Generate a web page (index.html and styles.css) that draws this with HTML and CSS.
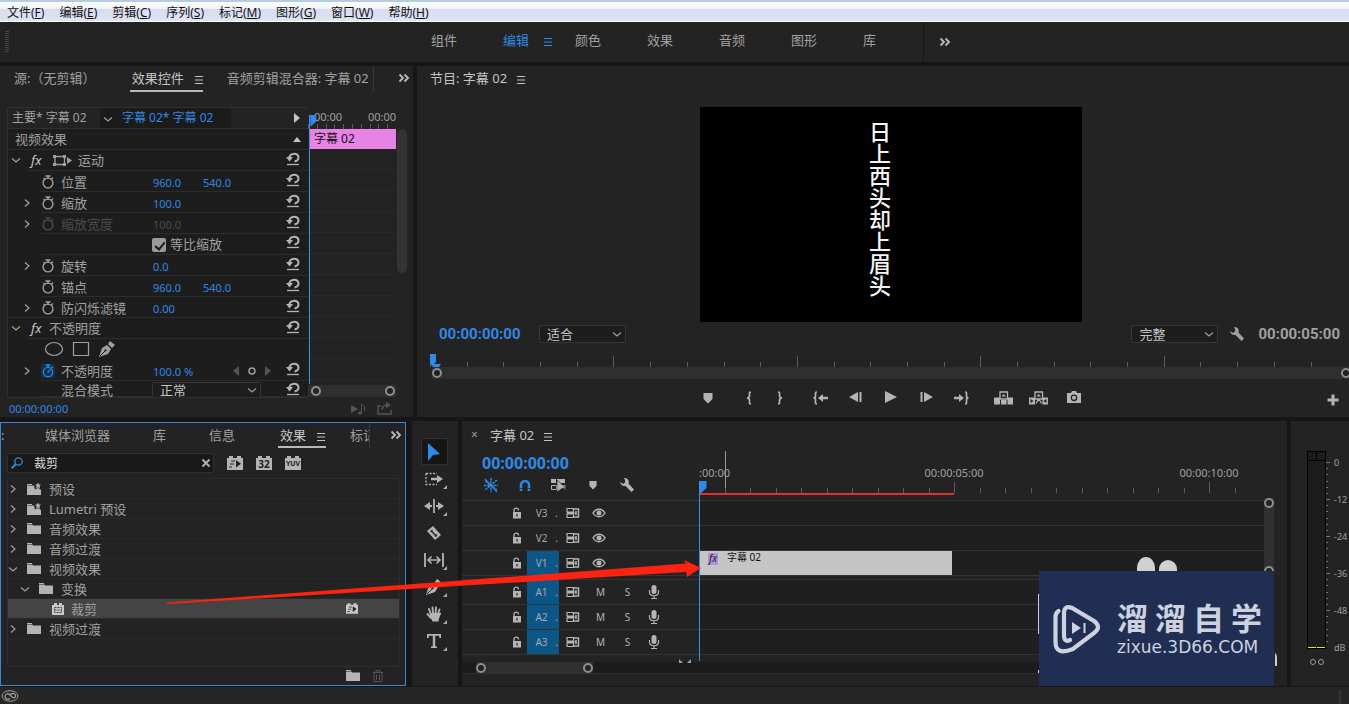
FILE: index.html
```html
<!DOCTYPE html>
<html lang="zh-CN">
<head>
<meta charset="utf-8">
<title>字幕 02</title>
<link rel="stylesheet" href="styles.css">
</head>
<body>
<svg class="sprite" aria-hidden="true">
  <symbol id="reset" viewBox="0 0 14 14"><path d="M3 6.500C4 0 12.500.5 12.500 5.500c0 2.500-1.500 3.500-4 4" fill="none" stroke="currentColor" stroke-width="2"/><path d="M0 5h7L3.500 9.500z" fill="currentColor"/><path d="M1 12.500h12" stroke="currentColor" stroke-width="1.300"/></symbol>
  <symbol id="watch" viewBox="0 0 14 14"><circle cx="7" cy="8" r="4.900" fill="none" stroke="currentColor" stroke-width="1.400"/><path d="M4.500 1h5M7 1v2.500M10.500 4l1.500-1.500M3.500 4L2.500 3" stroke="currentColor" stroke-width="1.400" fill="none"/></symbol>
  <symbol id="watch-on" viewBox="0 0 14 14"><circle cx="7" cy="8" r="4.700" fill="none" stroke="currentColor" stroke-width="1.200"/><path d="M4.500 1h5M7 1v2.500M10.500 4l1.500-1.500M6.500 8.500l3-3" stroke="currentColor" stroke-width="1.300" fill="none"/></symbol>
  <symbol id="right" viewBox="0 0 10 10"><path d="M3 1.500L7 5 3 8.500" fill="none" stroke="currentColor" stroke-width="1.200"/></symbol>
  <symbol id="down" viewBox="0 0 10 10"><path d="M1 3.500l4 3.500 4-3.500" fill="none" stroke="currentColor" stroke-width="1.200"/></symbol>
  <symbol id="menu" viewBox="0 0 10 10"><path d="M1 1.500h8M1 5h8M1 8.500h8" stroke="currentColor"/></symbol>
  <symbol id="more" viewBox="0 0 12 10"><path d="M1.500 1.500L5 5 1.500 8.500M6.500 1.500L10 5 6.500 8.500" fill="none" stroke="currentColor" stroke-width="1.900"/></symbol>
  <symbol id="motion" viewBox="0 0 20 14"><path d="M3 3.500h9.500v8H3z" fill="none" stroke="currentColor" stroke-width="1.300"/><path d="M1 2h3v3H1zM11 2h3v3h-3zM1 10h3v3H1zM11 10h3v3h-3z" fill="currentColor"/><path d="M15 4l5 3.500-5 3.500z" fill="currentColor"/></symbol>
  <symbol id="pen" viewBox="0 0 16 16"><path d="M0 16L3 7l5-3 4 4-3 5z" fill="currentColor"/><path d="M9 3l2-3 5 4-3 3z" fill="currentColor"/><path d="M1 15l5-5" stroke="#1d1d1d"/><circle cx="6.500" cy="9.300" r="1.100" fill="#1d1d1d"/></symbol>
  <symbol id="folder" viewBox="0 0 14 12"><path d="M0 0h5v1H0z" fill="currentColor"/><path d="M0 1.500h5.500l.5 1h8V11H0z" fill="currentColor"/></symbol>
  <symbol id="folder-star" viewBox="0 0 14 12"><path d="M0 1h5v1H0zM0 2.500h7l1 4 3-1.500 3 2V12H0z" fill="currentColor"/><path d="M11-1l.9 2.500H14L12.500 3l.6 2.800L11 4.200 9 5.800 9.600 3 8 1.500h2.100z" fill="currentColor"/></symbol>
  <symbol id="fast" viewBox="0 0 16 14"><path d="M0 2h2V0h4v2h4V0h4v2h2v12H0z" fill="currentColor"/><path d="M9 4l5 3.700L9 11.500z" fill="#222"/><path d="M4 5h4M3 8h4M2 11h3" stroke="#222"/></symbol>
  <symbol id="brick" viewBox="0 0 16 14"><path d="M0 2h2V0h4v2h4V0h4v2h2v12H0z" fill="currentColor"/></symbol>
  <symbol id="crop" viewBox="0 0 12 12"><path d="M0 2h2V0h3v2h2V0h3v2h2v10H0z" fill="currentColor"/><path d="M2.500 4.500h7v5h-7zM2.500 7h7" fill="none" stroke="#444" stroke-dasharray="2 1"/></symbol>
  <symbol id="find" viewBox="0 0 12 12"><circle cx="7.500" cy="4.500" r="3.700" fill="none" stroke="currentColor" stroke-width="1.300"/><path d="M5 7L.7 11.300" stroke="currentColor" stroke-width="2"/></symbol>
  <symbol id="trash" viewBox="0 0 12 12"><path d="M1 2.500h10M4 2V.7h4V2M2 3v8.500h8V3M4.500 4.500v5.500M7.500 4.500v5.500" fill="none" stroke="currentColor"/></symbol>
  <symbol id="marker" viewBox="0 0 10 12"><path d="M.5 1h9v6L5 11.500.5 7z" fill="currentColor"/></symbol>
  <symbol id="in" viewBox="0 0 6 14"><path d="M5 1C3 1 3.500 2 3.500 4.500 3.500 6 2.500 7 1 7c1.500 0 2.500 1 2.500 2.500C3.500 12 3 13 5 13" fill="none" stroke="currentColor" stroke-width="1.700"/></symbol>
  <symbol id="out" viewBox="0 0 6 14"><path d="M1 1c2 0 1.500 1 1.500 3.500C2.500 6 3.500 7 5 7 3.500 7 2.500 8 2.500 9.500 2.500 12 3 13 1 13" fill="none" stroke="currentColor" stroke-width="1.700"/></symbol>
  <symbol id="goin" viewBox="0 0 16 14"><path d="M4 1C2 1 2.500 2 2.500 5 2.500 6 2 7 .5 7 2 7 2.500 8 2.500 9c0 3-.5 4 1.500 4" fill="none" stroke="currentColor" stroke-width="1.700"/><path d="M5 7l5-4v2.800h5v2.400h-5V11z" fill="currentColor"/></symbol>
  <symbol id="goout" viewBox="0 0 16 14"><path d="M12 1c2 0 1.500 1 1.500 4 0 1 .5 2 2 2-1.500 0-2 1-2 2 0 3 .5 4-1.500 4" fill="none" stroke="currentColor" stroke-width="1.700"/><path d="M11 7L6 3v2.800H1v2.400h5V11z" fill="currentColor"/></symbol>
  <symbol id="back" viewBox="0 0 14 12"><path d="M0 6l9-5v10z" fill="currentColor"/><path d="M11.500 1v10" stroke="currentColor" stroke-width="2"/></symbol>
  <symbol id="fwd" viewBox="0 0 14 12"><path d="M14 6L5 1v10z" fill="currentColor"/><path d="M2.500 1v10" stroke="currentColor" stroke-width="2"/></symbol>
  <symbol id="play" viewBox="0 0 12 12"><path d="M0 0l12 6-12 6z" fill="currentColor"/></symbol>
  <symbol id="lift" viewBox="0 0 20 14"><path d="M0 6.500h6v7H0zM7 9h5.500v4.500H7zM13.500 6.500h5.500v7h-5.500z" fill="currentColor"/><path d="M6 1h7.500v7H6z" fill="none" stroke="currentColor" stroke-width="1.300"/><path d="M7.500 5.500L9.700 3 12 5.500z" fill="currentColor"/></symbol>
  <symbol id="extract" viewBox="0 0 20 14"><path d="M0 6.500h6v7H0zM13.500 6.500h5.500v7h-5.500z" fill="currentColor"/><path d="M1.500 8l3 2-3 2zM17.500 8l-3 2 3 2z" fill="#222"/><path d="M6 1h7.500v7H6zM7 12.500L9.700 8l3 4.500" fill="none" stroke="currentColor" stroke-width="1.300"/><path d="M7.500 5.500L9.700 3 12 5.500z" fill="currentColor"/></symbol>
  <symbol id="camera" viewBox="0 0 14 12"><path d="M0 2h4l1-2h4l1 2h4v10H0z" fill="currentColor"/><circle cx="7" cy="6.800" r="2.700" fill="none" stroke="#222" stroke-width="1.300"/></symbol>
  <symbol id="plus" viewBox="0 0 12 12"><path d="M6 .5v11M.5 6h11" stroke="currentColor" stroke-width="3"/></symbol>
  <symbol id="wrench" viewBox="0 0 14 14"><path d="M4 0c4 0 5.500 2.500 4.500 5.500l5.500 6-2.500 2.500-6-6C3 8.500.5 7 0 4l3 2 2.200-1.800L5 2z" fill="currentColor"/></symbol>
  <symbol id="nest" viewBox="0 0 16 16"><path d="M8 1v14M1 8.500h14M2 4l12 9M14 3L2 13" stroke="currentColor" stroke-width="1.500" stroke-dasharray="2.500 .7"/><path d="M2 2l12 13" stroke="currentColor" stroke-width="1.200"/></symbol>
  <symbol id="magnet" viewBox="0 0 12 12"><path d="M2 12V6a4 4 0 0 1 8 0v6" fill="none" stroke="currentColor" stroke-width="2.600"/><path d="M0 9.500h12" stroke="#222" stroke-width=".7"/></symbol>
  <symbol id="linked" viewBox="0 0 16 14"><path d="M0 1h5v4H0zM6 1h8v4H6z" fill="currentColor"/><path d="M.5 7.500h5v4h-5zM12 7.500h2v4" fill="none" stroke="currentColor"/><path d="M6 2l9 8-4 .5L6 14z" fill="currentColor" stroke="#222" stroke-width=".6"/></symbol>
  <symbol id="lock" viewBox="0 0 10 12"><path d="M1 5h8v6.500H1z" fill="currentColor"/><path d="M2 5V3a2.300 2.300 0 0 1 4.500 0v.5" fill="none" stroke="currentColor" stroke-width="1.300"/><path d="M5 7v2.500" stroke="#222" stroke-width="1.200"/></symbol>
  <symbol id="sync" viewBox="0 0 14 12"><path d="M1 1.500h6.500v3.500H1zM1 7h6.500v3.500H1zM1 6h9" fill="none" stroke="currentColor" stroke-width="1.200"/><path d="M8 2h4.500v8H8M10 4v4" fill="none" stroke="currentColor" stroke-width="1.500"/></symbol>
  <symbol id="eye" viewBox="0 0 14 10"><path d="M1 5c3-5 9-5 12 0-3 5-9 5-12 0z" fill="none" stroke="currentColor" stroke-width="1.400"/><circle cx="7" cy="5" r="2.500" fill="currentColor"/></symbol>
  <symbol id="mic" viewBox="0 0 12 14"><rect x="3.500" y="0" width="5" height="9" rx="2.500" fill="currentColor"/><path d="M1.500 5v2c0 5 9 5 9 0V5M6 10.500V13M3 13.500h6" fill="none" stroke="currentColor" stroke-width="1.200"/></symbol>
  <symbol id="select" viewBox="0 0 16 18"><path d="M2 0l12 11-7 1-5 6z" fill="currentColor"/></symbol>
  <symbol id="trackselect" viewBox="0 0 18 14"><path d="M1 1.500h11M1 1.500v11h11" fill="none" stroke="currentColor" stroke-width="1.300" stroke-dasharray="2 1.500"/><path d="M6 5.800h6V3l6 4-6 4V8.300H6z" fill="currentColor"/></symbol>
  <symbol id="ripple" viewBox="0 0 20 14"><path d="M10 0v14" stroke="currentColor" stroke-width="1.700"/><path d="M0 7l6-4v3h2v2H6v3zM20 7l-6-4v3h-2v2h2v3z" fill="currentColor"/></symbol>
  <symbol id="razor" viewBox="0 0 16 16"><path d="M1 6l6-5 8 9-6 5z" fill="currentColor"/><path d="M5 5.500l5.500 6M4.500 7l2-2M9 11.500l2-2" stroke="#222" stroke-width="1.200"/></symbol>
  <symbol id="slip" viewBox="0 0 20 14"><path d="M1 0v14M19 0v14" stroke="currentColor" stroke-width="1.800"/><path d="M4 7h12M7.500 3.500L4 7l3.500 3.500M12.500 3.500L16 7l-3.500 3.500" fill="none" stroke="currentColor" stroke-width="1.600"/></symbol>
  <symbol id="hand" viewBox="0 0 16 16"><path d="M5 9L3 3M7 8L6.500 1.500M9.500 8L10 1.500M11.500 9L13.500 3.500M5 12L1.500 8" stroke="currentColor" stroke-width="1.900" stroke-linecap="round"/><path d="M4 7h8.500l2.500-.5c0 3-2 4-2.500 9h-6c-.5-2-2.500-4-2.500-8.500z" fill="currentColor"/></symbol>
  <symbol id="type" viewBox="0 0 14 14"><path d="M0 0h14v4h-1.500L12 1.800H8.200v10.400L10 12.500V14H4v-1.500l1.800-.3V1.800H2L1.500 4H0z" fill="currentColor"/></symbol>
  <symbol id="cc" viewBox="0 0 18 12"><ellipse cx="9" cy="6" rx="8" ry="5.300" fill="none" stroke="currentColor"/><path d="M9 8.500c-2 1.500-5 .5-5-2S7 3 8.500 4.500l3 3c3 1.500 4.500-3 1-4-1.500-.3-2.500.5-3 1" fill="none" stroke="currentColor" stroke-width="1.300"/></symbol>
  <symbol id="playhead" viewBox="0 0 7 12"><path d="M0 0h6.500v7L1 12H0z" fill="currentColor"/></symbol>
</svg>

<nav class="menubar">
  <button>文件(<u>F</u>)</button><button>编辑(<u>E</u>)</button><button>剪辑(<u>C</u>)</button><button>序列(<u>S</u>)</button><button>标记(<u>M</u>)</button><button>图形(<u>G</u>)</button><button>窗口(<u>W</u>)</button><button>帮助(<u>H</u>)</button>
</nav>

<nav class="workspaces">
  <span class="grip"></span>
  <div class="spaces">
    <button>组件</button><button class="on">编辑<svg class="i10"><use href="#menu"/></svg></button><button>颜色</button><button>效果</button><button>音频</button><button>图形</button><button>库</button>
  </div>
  <button class="overflow" aria-label="更多工作区"><svg class="more"><use href="#more"/></svg></button>
</nav>

<main>
<div class="row upper">
  <section class="panel controls">
    <div class="tabs">
      <button class="source">源:（无剪辑）</button>
      <button class="tab-on">效果控件<svg class="i10"><use href="#menu"/></svg></button>
      <button class="mixer">音频剪辑混合器: 字幕 02</button>
      <button class="tabs-more" aria-label="更多面板"><svg class="more"><use href="#more"/></svg></button>
    </div>
    <div class="fx-body">
      <div class="fx-list">
        <div class="clip-head">
          <span class="master">主要* 字幕 02</span>
          <span class="current"><svg class="i10"><use href="#down"/></svg>字幕 02* 字幕 02</span>
          <svg class="tri" viewBox="0 0 6 10"><path d="M0 0l6 5-6 5z" fill="currentColor"/></svg>
        </div>
        <div class="section-head">视频效果<svg class="tri-up" viewBox="0 0 8 5"><path d="M0 5l4-5 4 5z" fill="currentColor"/></svg></div>
        <div class="group"><svg class="i10"><use href="#down"/></svg><em>fx</em><svg class="motion"><use href="#motion"/></svg><span>运动</span><button class="reset" aria-label="重置"><svg class="i14"><use href="#reset"/></svg></button></div>
        <div class="param"><i></i><svg class="i14"><use href="#watch"/></svg><span>位置</span><b>960.0</b><b>540.0</b><button class="reset" aria-label="重置"><svg class="i14"><use href="#reset"/></svg></button></div>
        <div class="param"><i><svg class="i10"><use href="#right"/></svg></i><svg class="i14"><use href="#watch"/></svg><span>缩放</span><b>100.0</b><b></b><button class="reset" aria-label="重置"><svg class="i14"><use href="#reset"/></svg></button></div>
        <div class="param off"><i><svg class="i10"><use href="#right"/></svg></i><svg class="i14"><use href="#watch"/></svg><span>缩放宽度</span><b>100.0</b><b></b><button class="reset" aria-label="重置"><svg class="i14"><use href="#reset"/></svg></button></div>
        <div class="param check"><label><input type="checkbox" checked>等比缩放</label><button class="reset" aria-label="重置"><svg class="i14"><use href="#reset"/></svg></button></div>
        <div class="param"><i><svg class="i10"><use href="#right"/></svg></i><svg class="i14"><use href="#watch"/></svg><span>旋转</span><b>0.0</b><b></b><button class="reset" aria-label="重置"><svg class="i14"><use href="#reset"/></svg></button></div>
        <div class="param"><i></i><svg class="i14"><use href="#watch"/></svg><span>锚点</span><b>960.0</b><b>540.0</b><button class="reset" aria-label="重置"><svg class="i14"><use href="#reset"/></svg></button></div>
        <div class="param last"><i><svg class="i10"><use href="#right"/></svg></i><svg class="i14"><use href="#watch"/></svg><span>防闪烁滤镜</span><b>0.00</b><b></b><button class="reset" aria-label="重置"><svg class="i14"><use href="#reset"/></svg></button></div>
        <div class="group"><svg class="i10"><use href="#down"/></svg><em>fx</em><span>不透明度</span><button class="reset" aria-label="重置"><svg class="i14"><use href="#reset"/></svg></button></div>
        <div class="shapes">
          <button aria-label="椭圆蒙版"><svg class="shape" viewBox="0 0 20 16"><ellipse cx="10" cy="8" rx="8.500" ry="6.500" fill="none" stroke="currentColor" stroke-width="1.200"/></svg></button>
          <button aria-label="矩形蒙版"><svg class="shape" viewBox="0 0 20 16"><path d="M2.500 1.500h15v13h-15z" fill="none" stroke="currentColor" stroke-width="1.200"/></svg></button>
          <button aria-label="钢笔"><svg class="i16"><use href="#pen"/></svg></button>
        </div>
        <div class="param"><i><svg class="i10"><use href="#right"/></svg></i><svg class="i14 keyed"><use href="#watch-on"/></svg><span>不透明度</span><b>100.0 %</b><span class="keys"><svg class="key" viewBox="0 0 6 10"><path d="M6 0v10L0 5z" fill="#555"/></svg><svg class="key-dot" viewBox="0 0 8 8"><circle cx="4" cy="4" r="3" fill="none" stroke="currentColor" stroke-width="1.500"/></svg><svg class="key" viewBox="0 0 6 10"><path d="M0 0v10l6-5z" fill="#555"/></svg></span><button class="reset" aria-label="重置"><svg class="i14"><use href="#reset"/></svg></button></div>
        <div class="param blend"><i></i><i></i><label for="blend">混合模式</label><span class="drop"><select id="blend"><option>正常</option></select><svg class="i10"><use href="#down"/></svg></span><button class="reset" aria-label="重置"><svg class="i14"><use href="#reset"/></svg></button></div>
      </div>
      <div class="mini">
        <div class="mini-ruler"><div class="mini-labels"><span>00:00</span><span>00:00</span></div><div class="ticks mini-ticks" data-count="10"></div></div>
        <div class="mini-clip">字幕 02</div>
        <div class="mini-rows"></div>
        <div class="hscroll"><span class="ring"></span><span class="ring"></span></div>
        <div class="mini-head"><svg><use href="#playhead"/></svg></div>
      </div>
      <div class="vscroll"></div>
    </div>
    <div class="fx-foot"><span>00:00:00:00</span>
      <svg class="i16 first" viewBox="0 0 16 16"><path d="M1 4l7 4-7 4z" fill="currentColor"/><path d="M11.500 12V3l3 3v4" fill="none" stroke="currentColor"/><ellipse cx="10" cy="12" rx="2" ry="1.500" fill="currentColor"/></svg>
      <svg class="i16" viewBox="0 0 16 16"><path d="M4 5H1v8h13V9M5 9c0-4 2-5 6-5" fill="none" stroke="currentColor" stroke-width="1.500"/><path d="M9 1l5 3-5 3.500z" fill="currentColor"/></svg>
    </div>
  </section>

  <section class="panel program">
    <div class="program-title">节目: 字幕 02<svg class="i10"><use href="#menu"/></svg></div>
    <div class="screen"><p>日上西头却上眉头</p></div>
    <div class="monitor-bar">
      <span class="tc blue">00:00:00:00</span>
      <span class="drop"><select aria-label="缩放级别"><option>适合</option></select><svg class="i10"><use href="#down"/></svg></span>
      <span class="drop res"><select aria-label="回放分辨率"><option>完整</option></select><svg class="i10"><use href="#down"/></svg></span>
      <button class="settings" aria-label="设置"><svg class="i14"><use href="#wrench"/></svg></button>
      <span class="tc">00:00:05:00</span>
    </div>
    <div class="monitor-ruler"><div class="ticks" data-count="25" data-major="5"></div><svg class="monitor-head" viewBox="0 0 11 14"><path d="M0 0h6v8l-2 2h7l-2 3H3L0 9z" fill="currentColor"/></svg></div>
    <div class="hscroll wide"><span class="ring"></span><span class="ring"></span></div>
    <div class="transport">
      <span class="side"></span>
      <div><button aria-label="添加标记"><svg class="mk"><use href="#marker"/></svg></button></div>
      <div class="narrow"><button aria-label="标记入点"><svg class="br"><use href="#in"/></svg></button><button aria-label="标记出点"><svg class="br"><use href="#out"/></svg></button></div>
      <div><button aria-label="转到入点"><svg class="go"><use href="#goin"/></svg></button><button aria-label="后退一帧"><svg class="st"><use href="#back"/></svg></button><button aria-label="播放"><svg class="i12"><use href="#play"/></svg></button><button aria-label="前进一帧"><svg class="st"><use href="#fwd"/></svg></button><button aria-label="转到出点"><svg class="go"><use href="#goout"/></svg></button></div>
      <div><button aria-label="提升"><svg class="lf"><use href="#lift"/></svg></button><button aria-label="提取"><svg class="lf"><use href="#extract"/></svg></button><button aria-label="导出帧"><svg class="st"><use href="#camera"/></svg></button></div>
      <span class="side"><button aria-label="按钮编辑器"><svg class="i12"><use href="#plus"/></svg></button></span>
    </div>
  </section>
</div>

<div class="row lower">
  <section class="panel effects">
    <div class="tabs">
      <span class="cut">:</span><button>媒体浏览器</button><button>库</button><button>信息</button><button class="tab-on">效果<svg class="i10"><use href="#menu"/></svg></button><button class="clipped">标记</button>
      <button class="tabs-more" aria-label="更多面板"><svg class="more"><use href="#more"/></svg></button>
    </div>
    <div class="search">
      <div class="box"><svg class="i12"><use href="#find"/></svg><input type="text" value="裁剪" aria-label="搜索效果"><button aria-label="清除"><svg class="i10" viewBox="0 0 10 10"><path d="M1.500 1.500l7 7M8.500 1.500l-7 7" stroke="currentColor" stroke-width="1.800"/></svg></button></div>
      <button aria-label="加速效果"><svg class="badge"><use href="#fast"/></svg></button>
      <button class="lettered"><svg class="badge"><use href="#brick"/></svg><span>32</span></button>
      <button class="lettered yuv"><svg class="badge"><use href="#brick"/></svg><span>YUV</span></button>
    </div>
    <ul class="tree">
      <li><svg class="i10"><use href="#right"/></svg><svg class="fold"><use href="#folder-star"/></svg>预设</li>
      <li><svg class="i10"><use href="#right"/></svg><svg class="fold"><use href="#folder-star"/></svg>Lumetri 预设</li>
      <li><svg class="i10"><use href="#right"/></svg><svg class="fold"><use href="#folder"/></svg>音频效果</li>
      <li><svg class="i10"><use href="#right"/></svg><svg class="fold"><use href="#folder"/></svg>音频过渡</li>
      <li><svg class="i10"><use href="#down"/></svg><svg class="fold"><use href="#folder"/></svg>视频效果</li>
      <li class="l2"><svg class="i10"><use href="#down"/></svg><svg class="fold"><use href="#folder"/></svg>变换</li>
      <li class="l3"><svg class="i12"><use href="#crop"/></svg>裁剪<svg class="fast"><use href="#fast"/></svg></li>
      <li><svg class="i10"><use href="#right"/></svg><svg class="fold"><use href="#folder"/></svg>视频过渡</li>
    </ul>
    <div class="tree-foot"><button aria-label="新建自定义素材箱"><svg class="fold"><use href="#folder"/></svg></button><button class="dim" aria-label="删除"><svg class="i12"><use href="#trash"/></svg></button></div>
  </section>

  <section class="panel tools">
    <button class="on" aria-label="选择工具"><svg class="t16"><use href="#select"/></svg></button>
    <button class="sub" aria-label="向前选择轨道工具"><svg class="t18"><use href="#trackselect"/></svg></button>
    <button class="sub" aria-label="波纹编辑工具"><svg class="t20"><use href="#ripple"/></svg></button>
    <button aria-label="剃刀工具"><svg class="i16"><use href="#razor"/></svg></button>
    <button class="sub" aria-label="外滑工具"><svg class="t20"><use href="#slip"/></svg></button>
    <button class="sub" aria-label="钢笔工具"><svg class="i16"><use href="#pen"/></svg></button>
    <button class="sub" aria-label="手形工具"><svg class="i16"><use href="#hand"/></svg></button>
    <button class="sub" aria-label="文字工具"><svg class="i14"><use href="#type"/></svg></button>
  </section>

  <section class="panel timeline">
    <div class="seq-tab"><span class="x">×</span>字幕 02<svg class="i10"><use href="#menu"/></svg></div>
    <div class="seq">
      <div class="seq-main">
        <div class="seq-head">
          <div class="seq-left">
            <span class="seq-tc">00:00:00:00</span>
            <div class="seq-tools"><button class="blue" aria-label="嵌套"><svg class="i16"><use href="#nest"/></svg></button><button class="blue" aria-label="对齐"><svg class="i12"><use href="#magnet"/></svg></button><button aria-label="链接选择项"><svg class="go"><use href="#linked"/></svg></button><button aria-label="添加标记"><svg class="mk s"><use href="#marker"/></svg></button><button aria-label="时间轴设置"><svg class="i14"><use href="#wrench"/></svg></button></div>
          </div>
          <div class="ruler"><span class="l0">:00:00</span><span class="l5">00:00:05:00</span><span class="l10">00:00:10:00</span><span class="pin"></span><div class="ticks" data-count="22" data-major="10"></div><span class="render"></span></div>
        </div>
        <div class="track"><div class="th"><svg class="lock"><use href="#lock"/></svg><button class="name">V3</button><svg class="sy"><use href="#sync"/></svg><svg class="eye"><use href="#eye"/></svg></div><div class="lane"></div></div>
        <div class="track"><div class="th"><svg class="lock"><use href="#lock"/></svg><button class="name">V2</button><svg class="sy"><use href="#sync"/></svg><svg class="eye"><use href="#eye"/></svg></div><div class="lane"></div></div>
        <div class="track"><div class="th"><svg class="lock"><use href="#lock"/></svg><button class="name on">V1</button><svg class="sy"><use href="#sync"/></svg><svg class="eye"><use href="#eye"/></svg></div><div class="lane"><div class="clip"><em>fx</em><span>字幕 02</span></div></div></div>
        <div class="split"></div>
        <div class="track"><div class="th"><svg class="lock"><use href="#lock"/></svg><button class="name on">A1</button><svg class="sy"><use href="#sync"/></svg><button class="ms">M</button><button class="ms">S</button><svg class="mic"><use href="#mic"/></svg></div><div class="lane"></div></div>
        <div class="track"><div class="th"><svg class="lock"><use href="#lock"/></svg><button class="name on">A2</button><svg class="sy"><use href="#sync"/></svg><button class="ms">M</button><button class="ms">S</button><svg class="mic"><use href="#mic"/></svg></div><div class="lane"></div></div>
        <div class="track"><div class="th"><svg class="lock"><use href="#lock"/></svg><button class="name on">A3</button><svg class="sy"><use href="#sync"/></svg><button class="ms">M</button><button class="ms">S</button><svg class="mic"><use href="#mic"/></svg></div><div class="lane"></div></div>
        <div class="below"><svg viewBox="0 0 12 4"><path d="M0 0l4 4H0zM12 0L8 4h4z" fill="currentColor"/></svg></div>
        <div class="seq-playhead"><svg><use href="#playhead"/></svg></div>
      </div>
      <div class="seq-v"><span class="ring"></span><span class="ring"></span></div>
    </div>
    <div class="seq-h"><div class="hscroll"><span class="ring"></span><span class="ring"></span></div></div>
    <div class="brand">
      <svg class="marks" viewBox="0 0 245 130"><path d="M99 12a9 11 0 0 1 18 0v4H99zM121 13a9 9 0 0 1 18 0v4h-18zM0 38h2v40H0zM0 114h5v3H0zM237 97q2 1 2 6v7h-2z" fill="#d0d0d0"/></svg>
      <div class="card">
        <svg class="brand-logo" viewBox="0 0 48 50"><path d="M17 36q-6 3-6-5V9q0-8 8-5l22 13q8 6 0 12L20 45Q2.500 52 2.500 38V13q0-4 3-6" fill="none" stroke="currentColor" stroke-width="4.200" stroke-linecap="round"/><path d="M19 18l9 6-9 6z" fill="currentColor"/><path d="M31.500 19v10" stroke="currentColor" stroke-width="2"/></svg>
        <div class="brand-text"><div class="cn"><span>溜</span><span>溜</span><span>自</span><span>学</span></div><div class="en">zixue.3D66.COM</div></div>
      </div>
    </div>
  </section>

  <section class="panel meters">
    <div class="meter-row">
      <div class="meter"><div class="peaks"><span></span><span></span></div><div class="levels"><span></span><span></span></div></div>
      <div class="scale" data-count="30"></div>
      <div class="db"><span>0</span><span>-12</span><span>-24</span><span>-36</span><span>-48</span><span>dB</span></div>
    </div>
    <div class="solo"><span></span><span></span></div>
  </section>
  <svg class="pointer" viewBox="160 550 545 60"><path d="M167 602.500L686 563.500l-2-3.500 17 8-14 9-1-5L167 604z" fill="#fb2412"/></svg>
</div>
</main>
<footer class="status"><svg><use href="#cc"/></svg><span></span></footer>
<script src="script.js"></script>
</body>
</html>
```
FILE: styles.css
```css
* { box-sizing: border-box; }
:root { --ink: #a0a0a0; --light: #c4c4c4; --blue: #3088e4; --panel: #232323; --line: #2c2c2c; }
body { margin: 0; min-height: 100vh; display: flex; flex-direction: column; background: #161616; color: var(--ink); font: 13px/18px "Noto Sans", "Noto Sans CJK SC", sans-serif; overflow-x: hidden; }
button { background: none; border: 0; padding: 0; margin: 0; color: inherit; font: inherit; white-space: nowrap; }
svg { display: block; flex: none; overflow: visible; }
.sprite { position: absolute; width: 0; height: 0; }
.i10 { width: 10px; height: 10px; }
.i12 { width: 12px; height: 12px; }
.i14 { width: 14px; height: 14px; }
.i16 { width: 16px; height: 16px; }
.more { width: 12px; height: 10px; color: #b8b8b8; }
.blue { color: var(--blue); }

.menubar { display: flex; gap: 15px; height: 22px; padding: 2px 7px 0; border-top: 2px solid #b7cbe0; border-bottom: 1px solid #fff; background: linear-gradient(#fff, #eef1f9 35%, #d7ddf0 40%, #dfe4f3); color: #111; font-size: 12px; line-height: 16px; }

.workspaces { display: flex; height: 40px; background: var(--panel); }
.grip { width: 4px; height: 22px; margin: 9px 0 0 5px; background: repeating-linear-gradient(#444 0 1px, transparent 1px 2px); }
.spaces { display: flex; margin-left: 422px; padding-bottom: 4px; border-right: 1px solid #161616; }
.spaces button { width: 72px; display: flex; align-items: center; gap: 14px; }
.spaces button:last-child { width: 60px; }
.spaces .on { color: var(--blue); }
.spaces svg { margin-top: 4px; }
.overflow { padding-left: 15px; }

main { flex: 1; padding-top: 4px; display: flex; flex-direction: column; gap: 4px; }
.row { display: grid; gap: 4px; }
.upper { grid-template-columns: minmax(0, 413fr) minmax(0, 932fr); }
.lower { position: relative; flex: 1; gap: 0; grid-template-columns: minmax(0, 406fr) 52px minmax(0, 833fr) 58px; }
.panel { background: var(--panel); min-width: 0; }

.tabs { display: flex; align-items: stretch; height: 26px; }
.tabs button { display: flex; align-items: center; padding-bottom: 2px; }
.tabs .tab-on { color: var(--light); border-bottom: 2px solid #b8b8b8; gap: 10px; padding: 0 0 0 2px; }
.tab-on svg { margin-top: 4px; }
.tabs .tabs-more { margin-left: auto; }

.controls { display: flex; flex-direction: column; }
.controls .tabs { margin-bottom: 15px; padding: 0 3px 0 14px; gap: 24px; }
.controls .source { width: 90px; overflow: hidden; }
.controls .tab-on { margin-left: 2px; width: 73px; flex: none; }
.controls .mixer { flex: 0 1 148px; overflow: hidden; border-right: 1px solid #383838; }
.fx-body { display: flex; padding: 0 6px 0 7px; }
.fx-list { flex: 1; min-width: 0; background: #1d1d1d; border: solid #303030; border-width: 0 0 1px 1px; overflow: hidden; }
.clip-head { display: flex; height: 22px; align-items: stretch; background: var(--panel); border: solid #303030; border-width: 1px 0; line-height: 19px; font-size: 12px; }
.master { padding-left: 4px; width: 92px; white-space: nowrap; }
.current { display: flex; gap: 9px; width: 131px; padding-left: 3px; background: #1b1b1b; color: var(--blue); white-space: nowrap; }
.current svg { margin-top: 6px; color: var(--ink); }
.tri { width: 6px; height: 10px; margin: 5px 8px 0 auto; color: var(--light); }
.section-head { display: flex; align-items: center; height: 21px; padding: 0 7px; border-bottom: 1px solid var(--line); }
.tri-up { width: 8px; height: 5px; margin-left: auto; color: var(--light); }
.group { display: flex; align-items: center; height: 21px; padding: 0 0 1px 3px; background: linear-gradient(90deg, transparent 20px, var(--line) 20px) bottom / 100% 1px no-repeat; }
.group em { width: 18px; margin: 0 2px 0 8px; padding-left: 2px; color: var(--light); font-size: 13px; }
.motion { width: 20px; height: 14px; margin: 0 6px 0 3px; }
.reset { margin-left: auto; padding: 0 8px 3px 0; color: #b4b4b4; }
.param { display: grid; grid-template-columns: 33px 20px 92px 50px 1fr 22px; align-items: center; height: 21px; padding-bottom: 2px; background: linear-gradient(90deg, transparent 33px, var(--line) 33px) bottom / 100% 1px no-repeat; }
.param.last { background: linear-gradient(var(--line), var(--line)) bottom / 100% 1px no-repeat; }
.param i { padding-left: 14px; }
.param b { padding-top: 3px; color: var(--blue); font-weight: 400; font-size: 11px; white-space: nowrap; }
.off span, .off b, .off > .i14 { color: #4c4c4c; }
.check { grid-template-columns: 1fr 22px; }
.check label { display: flex; align-items: center; gap: 4px; padding-left: 144px; }
.check input { appearance: none; width: 14px; height: 14px; margin: 2px 0 0; border-radius: 2px; background: #9a9a9a; position: relative; }
.check input::after { content: ""; position: absolute; left: 5px; top: 2px; width: 4px; height: 8px; border: solid #1d1d1d; border-width: 0 2px 2px 0; transform: rotate(40deg); }
.shapes { display: flex; gap: 7px; height: 21px; padding: 0 0 1px 36px; align-items: center; }
.shapes button:last-child { margin-left: 1px; }
.shape { width: 20px; height: 16px; }
.keyed { color: var(--blue); background: #10304e; }
.keys { display: flex; align-items: center; justify-content: flex-end; gap: 9px; padding-right: 15px; }
.key { width: 6px; height: 10px; }
.key-dot { width: 8px; height: 8px; }
.blend { grid-template-columns: 33px 20px 91px 109px 1fr 22px; height: 16px; padding: 0; }
.blend .reset { grid-column: 6; padding-bottom: 2px; }
.drop { position: relative; display: block; }
.drop select { appearance: none; width: 100%; height: 18px; padding: 0 7px; border: 1px solid #363636; border-radius: 2px; background: #1d1d1d; color: var(--light); font: inherit; line-height: 15px; }
.drop svg { position: absolute; right: 4px; top: 4px; pointer-events: none; }
.mini { position: relative; flex: 0 0 88px; display: flex; flex-direction: column; }
.mini-ruler { height: 22px; display: flex; flex-direction: column; justify-content: flex-end; }
.mini-labels { display: flex; justify-content: space-between; padding-left: 6px; font-size: 11px; line-height: 14px; }
.ticks { display: flex; align-items: flex-end; }
.ticks i { flex: 1; height: 5px; border-left: 1px solid #5c5c5c; }
.ticks i.major { height: 11px; }
.mini-clip { height: 20px; margin-left: 1px; padding-left: 5px; background: #e683e4; color: #111; line-height: 20px; font-size: 12px; }
.mini-rows { flex: 1; background: repeating-linear-gradient(transparent 0 20px, #2a2a2a 20px 21px); }
.hscroll { display: flex; align-items: center; justify-content: space-between; height: 12px; margin-bottom: 1px; background: #2f2f2f; padding: 0 1px; }
.mini .hscroll { padding-left: 3px; }
.ring { width: 10px; height: 10px; border: 2px solid #8e8e8e; border-radius: 50%; background: #222; }
.mini-head { position: absolute; left: 1px; top: 8px; bottom: 14px; border-left: 1px solid #3a8ee8; color: #2d8ceb; }
.mini-head svg { width: 7px; height: 11px; }
.vscroll { width: 10px; height: 144px; margin: 22px 0 0 1px; border-radius: 5px; background: #343434; }
.fx-foot { display: flex; align-items: center; height: 19px; padding: 2px 20px 0 9px; font-size: 11px; color: #555; }
.fx-foot span { color: var(--blue); }
.fx-foot .first { margin: 0 11px 0 auto; }

.program { display: flex; flex-direction: column; overflow: hidden; }
.program-title { display: flex; gap: 9px; padding: 3px 13px 20px; color: var(--light); }
.program-title svg { margin-top: 6px; }
.screen { width: 41%; aspect-ratio: 380 / 214; margin: 0 auto; position: relative; left: 8px; background: #000; display: flex; justify-content: center; align-items: center; }
.screen p { margin: 0 22px 12px 0; writing-mode: vertical-rl; color: #f4f4f4; font: 500 22px/22px "Noto Sans CJK SC", sans-serif; }
.monitor-bar { display: flex; align-items: center; padding: 0 9px 0 22px; height: 24px; }
.tc { font: 700 15px/18px Roboto, sans-serif; }
.tc.blue { width: 100px; }
.monitor-bar .drop { width: 87px; }
.monitor-bar .res { margin-left: auto; }
.settings { margin: 0 14px 0 12px; }
.monitor-ruler { position: relative; height: 21px; padding: 10px 2px 0 13px; }
.monitor-head { position: absolute; left: 13px; top: 8px; width: 11px; height: 14px; color: #2d8ceb; }
.monitor-ruler .ticks { height: 11px; }
.hscroll.wide { margin: 0 -3px 0 15px; padding-left: 0; }
.transport { flex: 1; display: flex; align-items: center; gap: 8px; padding-left: 16px; color: #b4b4b4; }
.transport div { display: flex; }
.transport div button { width: 35px; display: flex; justify-content: center; }
.transport .narrow button { width: 31px; }
.side { flex: 1; }
.side button { float: right; padding: 4px 10px 0 0; }
.mk { width: 10px; height: 12px; }
.mk.s { width: 8px; height: 10px; }
.br { width: 6px; height: 14px; }
.go { width: 16px; height: 14px; }
.st { width: 14px; height: 12px; }
.lf { width: 20px; height: 14px; }

.effects { display: flex; flex-direction: column; border: 1px solid #3a86cf; padding: 0 5px 0 6px; margin-top: 1px; }
.effects .tabs { height: 25px; margin: 0 -5px 0 -6px; padding: 0 3px 0 0; }
.effects .tabs button { padding: 0 0 2px; margin-right: 43px; }
.effects .tabs .cut { width: 44px; padding-top: 3px; }
.effects .tabs .tab-on { padding: 0 0 0 2px; margin-right: 24px; }
.effects .tabs .clipped { width: 20px; overflow: hidden; margin: 0; border-right: 1px solid #383838; }
.effects .tabs .tabs-more { margin: 0 0 0 auto; }
.search { display: flex; align-items: center; margin: 5px 0; height: 20px; gap: 13px; color: #b4b4b4; }
.box { display: flex; align-items: center; width: 207px; height: 20px; padding: 0 2px 0 3px; border: 1px solid #303030; border-radius: 2px; background: #191919; }
.box > svg { color: #3a86cf; }
.box input { flex: 1; min-width: 0; border: 0; outline: 0; padding: 0 0 0 11px; background: none; color: #d8d8d8; font: 12px/16px "Noto Sans CJK SC", sans-serif; }
.badge { width: 16px; height: 14px; }
.lettered { position: relative; }
.lettered span { position: absolute; inset: 2px 0 0; color: #222; font: 700 10px/12px "Noto Sans", sans-serif; text-align: center; }
.yuv span { font-size: 7px; }
.tree { flex: 1; list-style: none; margin: 0; padding: 0; border: 1px solid var(--line); }
.tree li { display: flex; align-items: center; height: 20px; border-bottom: 1px solid #292929; }
.tree li > .i10 { margin: 0 9px 0 0; }
.fold { width: 14px; height: 12px; margin-right: 8px; color: #b4b4b4; }
.tree .l2 { padding-left: 12px; }
.tree .l3 { padding-left: 44px; background: #444; }
.l3 .i12 { margin-right: 7px; color: #c8c8c8; }
.fast { width: 12px; height: 11px; margin: 0 41px 0 auto; color: #c8c8c8; }
.tree-foot { display: flex; justify-content: flex-end; height: 18px; align-items: center; padding-right: 16px; gap: 4px; }
.dim { color: #555; }

.tools { margin-left: 6px; padding: 17px 2px 0 0; display: flex; flex-direction: column; align-items: center; color: #b4b4b4; }
.tools button { position: relative; width: 27px; height: 27px; display: flex; align-items: center; justify-content: center; }
.tools .on { color: #2d8ceb; background: #161616; border: 1px solid #303030; }
.tools .sub::after { content: ""; position: absolute; right: 1px; bottom: 3px; border: solid transparent; border-width: 2px; border-right-color: #aaa; border-bottom-color: #aaa; }
.t16 { width: 16px; height: 18px; }
.t18 { width: 18px; height: 14px; }
.t20 { width: 20px; height: 14px; }

.timeline { position: relative; border: solid #161616; border-width: 0 4px; display: flex; flex-direction: column; }
.seq-tab { display: flex; height: 29px; padding: 5px 9px 0; color: var(--light); }
.x { width: 19px; color: var(--ink); font-size: 12px; }
.seq-tab svg { margin: 6px 0 0 9px; }
.seq { display: flex; padding-right: 13px; }
.seq-main { position: relative; flex: 1; min-width: 0; }
.seq-head, .track { display: grid; grid-template-columns: 237px minmax(0, 1fr); }
.seq-head { height: 50px; }
.seq-tc { display: block; padding: 2px 0 0 20px; color: var(--blue); font: 700 16px/22px "Open Sans", sans-serif; }
.seq-tools { display: flex; padding-left: 12px; height: 22px; color: #b4b4b4; }
.seq-tools button { width: 34px; display: flex; justify-content: center; align-items: center; }
.seq-tools .blue { color: var(--blue); }
.ruler, .lane { display: grid; grid-template-columns: repeat(22, minmax(0, 1fr)); padding-right: 4px; }
.ruler { position: relative; grid-template-rows: 32px 11px 7px; font-size: 11px; white-space: nowrap; }
.ruler > span { grid-row: 1; padding-top: 14px; text-align: center; }
.ruler .l0 { grid-column: 1 / 4; text-align: left; }
.ruler .l5 { grid-column: 9 / 13; }
.ruler .l10 { grid-column: 19 / 23; }
.ruler .ticks { grid-row: 2; grid-column: 1 / -1; }
.ruler .render { grid-row: 3; grid-column: 1 / 11; height: 2px; padding: 0; background: #e03030; }
.ruler .pin { grid-column: 2; grid-row: 1 / 3; margin-top: 1px; border-left: 1px solid #999; padding: 0; }
.track { height: 25px; border-top: 1px solid #333; }
.th { display: flex; align-items: center; padding-left: 50px; color: #b4b4b4; font-size: 10px; }
.lock { width: 10px; height: 12px; margin-right: 5px; }
.name { width: 32px; height: 24px; position: relative; padding-right: 3px; color: #a8a8a8; }
.name::after { content: "."; position: absolute; right: 1px; }
.name.on { background: #0d5688; }
.sy { width: 14px; height: 12px; margin: 0 7px; }
.eye { width: 14px; height: 10px; margin-left: 5px; }
.ms { width: 27px; }
.mic { width: 12px; height: 14px; margin-left: 7px; }
.lane { background: #1f1f1f; }
.clip { grid-column: 1 / 11; display: flex; gap: 9px; padding: 2px 0 0 9px; margin-right: 2px; background: #c5c5c5; color: #111; font-size: 10px; line-height: 9px; }
.clip em { height: 12px; padding: 1px 1px 0; background: #b095d0; color: #28104a; }
.split { height: 4px; border-top: 1px solid #333; }
.below { height: 8px; border-top: 1px solid #333; padding: 4px 0 0 217px; }
.below svg { width: 12px; height: 4px; }
.seq-playhead { position: absolute; left: 237px; top: 31px; bottom: 1px; border-left: 1px solid #3a8ee8; color: #2d8ceb; }
.seq-playhead svg { width: 7px; height: 12px; }
.seq-v { width: 10px; height: 78px; margin-top: 48px; display: flex; flex-direction: column; justify-content: space-between; background: #303030; }
.seq-h { padding-left: 14px; margin-right: 13px; background: #1b1b1b; border-bottom: 1px solid #303030; }
.seq-h .hscroll { width: 117px; height: 11px; margin: 0; padding: 0; }
.brand { position: absolute; right: 13px; bottom: 0; width: 235px; color: #ccd2de; }
.marks { position: absolute; left: 0; bottom: 0; width: 245px; height: 130px; margin-left: -1px; }
.card { position: relative; height: 115px; padding: 26px 12px 0 14px; display: flex; gap: 16px; background: #212e54; }
.brand-logo { width: 48px; height: 50px; margin-top: 7px; }
.brand-text { flex: 1; min-width: 0; }
.cn { display: flex; justify-content: space-between; font: 700 31px/40px "Noto Sans CJK SC", sans-serif; }
.en { font: 17px/20px "DejaVu Sans", sans-serif; white-space: nowrap; }

.meters { padding: 30px 0 0 16px; font-size: 9px; }
.meter-row { display: flex; height: 198px; }
.meter { width: 19px; display: flex; flex-direction: column; border: 1px solid #000; background: #1c1c1c; }
.peaks, .levels { display: flex; }
.peaks { height: 9px; border-bottom: 1px solid #000; }
.peaks span:first-child { border-right: 1px solid #000; }
.peaks span { flex: 1; }
.levels { flex: 1; align-items: flex-end; gap: 1px; }
.levels span { flex: 1; height: 1px; background: #e3e12a; }
.scale { width: 5px; height: 196px; padding-top: 11px; display: flex; flex-direction: column; }
.scale i { flex: 1; width: 2px; border-top: 1px solid #777; }
.scale i.major { width: 4px; }
.db { padding-left: 3px; margin-top: -7px; }
.db span { display: block; height: 37px; line-height: 37px; }
.solo { display: flex; gap: 2px; padding: 10px 0 0 3px; }
.solo span { width: 6px; height: 6px; border: 1px solid #999; border-radius: 50%; }
.pointer { position: absolute; left: 160px; top: 129px; width: 545px; height: 60px; pointer-events: none; }

.status { display: flex; justify-content: space-between; height: 18px; padding: 3px 8px 0 1px; border-top: 1px solid #161616; background: #262626; }
.status svg { width: 18px; height: 12px; }
.status span { border-left: 2px solid #363636; }
```
FILE: script.js
```js
function fill(el) {
  var count = Number(el.dataset.count);
  var major = Number(el.dataset.major || 5);
  for (var n = 0; n < count; n++) {
    var tick = document.createElement('i');
    if ((el.dataset.major && n > 0 && n % major === 0) || (el.className === 'scale' && n % 6 === 0)) tick.className = 'major';
    el.appendChild(tick);
  }
}
document.querySelectorAll('[data-count]').forEach(fill);
```
